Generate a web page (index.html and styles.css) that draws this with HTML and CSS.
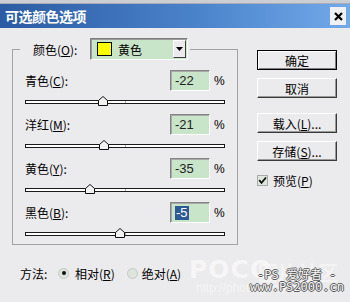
FILE: index.html
```html
<!DOCTYPE html>
<html>
<head>
<meta charset="utf-8">
<link rel="stylesheet" href="styles.css">
</head>
<body>
<div class="win">
  <div class="topstrip"></div>
  <div class="titlebar">
    <span class="title">可选颜色选项</span>
    <span class="close"><svg width="9" height="9" viewBox="0 0 9 9"><path d="M1 1 L8 8 M8 1 L1 8" stroke="#000" stroke-width="2.2"/></svg></span>
  </div>
  <div class="main">
    <fieldset class="group">
      <legend class="hdr">
        <span class="hlbl">颜色(<u>O</u>):</span>
        <span class="combo"><span class="swatch"></span><span class="ctext">黄色</span><span class="arrow"><svg width="7" height="4" viewBox="0 0 7 4"><path d="M0 0 H7 L3.5 4 Z" fill="#000"/></svg></span></span>
      </legend>
      <div class="row">
        <div class="line"><span class="lbl">青色(<u>C</u>):</span><span class="num">-22</span><span class="pct">%</span></div>
        <div class="slider"><div class="track"><span class="tick"></span></div><span class="thumb" style="left: calc(39% - 5px)"><svg width="10" height="10" viewBox="0 0 10 10"><path d="M0.5 9.5 V4.5 L5 0.5 L9.5 4.5 V9.5 Z" fill="#f2f2f2" stroke="#111"/></svg></span></div>
      </div>
      <div class="row">
        <div class="line"><span class="lbl">洋红(<u>M</u>):</span><span class="num">-21</span><span class="pct">%</span></div>
        <div class="slider"><div class="track"><span class="tick"></span></div><span class="thumb" style="left: calc(39.5% - 5px)"><svg width="10" height="10" viewBox="0 0 10 10"><path d="M0.5 9.5 V4.5 L5 0.5 L9.5 4.5 V9.5 Z" fill="#f2f2f2" stroke="#111"/></svg></span></div>
      </div>
      <div class="row">
        <div class="line"><span class="lbl">黄色(<u>Y</u>):</span><span class="num">-35</span><span class="pct">%</span></div>
        <div class="slider"><div class="track"><span class="tick"></span></div><span class="thumb" style="left: calc(32.5% - 5px)"><svg width="10" height="10" viewBox="0 0 10 10"><path d="M0.5 9.5 V4.5 L5 0.5 L9.5 4.5 V9.5 Z" fill="#f2f2f2" stroke="#111"/></svg></span></div>
      </div>
      <div class="row">
        <div class="line"><span class="lbl">黑色(<u>B</u>):</span><span class="num"><span class="sel">-5</span></span><span class="pct">%</span></div>
        <div class="slider"><div class="track"><span class="tick"></span></div><span class="thumb" style="left: calc(47.5% - 5px)"><svg width="10" height="10" viewBox="0 0 10 10"><path d="M0.5 9.5 V4.5 L5 0.5 L9.5 4.5 V9.5 Z" fill="#f2f2f2" stroke="#111"/></svg></span></div>
      </div>
    </fieldset>
    <div class="side">
      <div class="btn def">确定</div>
      <div class="btn b2">取消</div>
      <div class="btn b3">载入(<u>L</u>)...</div>
      <div class="btn b2">存储(<u>S</u>)...</div>
      <div class="chk"><span class="box"><svg width="9" height="9" viewBox="0 0 9 9"><path d="M1.2 4.2 L3.5 6.8 L8 1.5" stroke="#111" stroke-width="1.8" fill="none"/></svg></span><span class="chklbl">预览(<u>P</u>)</span></div>
    </div>
  </div>
  <div class="method">
    <span class="mlbl">方法:</span>
    <span class="radio on"><span class="dot"></span></span><span class="rlbl">相对(<u>R</u>)</span>
    <span class="radio r2"></span><span class="rlbl">绝对(<u>A</u>)</span>
  </div>
  <div class="wm">
    <span class="poco">POCO</span><span class="pocozh">图片社区</span>
    <span class="pocourl">http://photo.poco.cn</span>
    <span class="ps1">-PS 爱好者 -</span>
    <span class="ps2">www.PS2000.cn</span>
  </div>
</div>
</body>
</html>
```
FILE: styles.css
```css
* { box-sizing: border-box; }
html, body { margin: 0; padding: 0; }
body {
  width: 350px; height: 302px; overflow: hidden;
  background: #ebeaec;
  font-family: "Noto Sans CJK SC", "Liberation Sans", sans-serif;
  font-size: 12px; color: #000;
}
u { text-decoration: underline; text-underline-offset: 1px; }
.win { position: relative; width: 350px; height: 302px; background: #ebeaec; }
.topstrip { height: 4px; background: #cdced3; border-bottom: 1px solid #a9acb4; }
.titlebar {
  height: 24px; display: flex; align-items: center; justify-content: space-between;
  padding: 0 4px 0 5px;
  background: linear-gradient(to right, #2b5ba2, #4a82ca 55%, #72a9ea);
}
.title { color: #fff; font-weight: bold; font-size: 14px; letter-spacing: -0.5px; line-height: 24px; }
.close {
  width: 16px; height: 18px; background: #eef0f4;
  display: flex; align-items: center; justify-content: center;
}
.main { display: flex; gap: 19px; padding: 10px 0 0 12px; }
.group {
  width: 226px; margin: 0; min-width: 0;
  padding: 10px 12px 6px 12px;
  border: 1px solid #a2a1a5;
}
.hdr { display: flex; align-items: center; margin-left: -5px; padding: 0 2px 0 13px; }
.hlbl { width: 57px; }
.combo {
  width: 98px; height: 22px; display: flex; align-items: center;
  background: #c8e5c9; padding-left: 6px;
  border: 1px solid; border-color: #7f7f7f #fff #fff #7f7f7f;
  box-shadow: inset 1px 1px 0 #9a9a9a;
}
.swatch { width: 15px; height: 14px; background: #ffff00; border: 1px solid #000; }
.ctext { margin-left: 6px; }
.arrow {
  margin-left: auto; margin-right: 1px; width: 13px; height: 18px;
  background: #ebeaec; display: flex; align-items: center; justify-content: center;
  border: 1px solid; border-color: #fff #404040 #404040 #fff;
}
.row { display: flex; flex-direction: column; }
.row + .row { margin-top: 8px; }
.line { display: flex; align-items: center; height: 21px; }
.lbl { flex: 1; }
.num {
  width: 40px; height: 21px; background: #c8e5c9;
  border: 1px solid; border-color: #858585 #fff #fff #858585;
  box-shadow: inset 1px 1px 0 #a8a8a8;
  font-family: "Liberation Sans", sans-serif; font-size: 13px; color: #222;
  padding-left: 4px; display: flex; align-items: center;
}
.sel { background: #2d5a95; color: #fff; padding: 0 1px; line-height: 14px; }
.pct { width: 11px; margin-left: 4px; font-family: "Liberation Sans", sans-serif; font-size: 12px; }
.slider { position: relative; height: 10px; margin-top: 5px; }
.track {
  margin-top: 4px; height: 4px; background: #fff; border: 1px solid #1a1a1a;
  display: flex; justify-content: center;
}
.tick { width: 1px; height: 2px; background: #b0b0b0; }
.thumb { position: absolute; top: 0; width: 10px; height: 10px; display: block; }
.thumb svg { display: block; }
.side { display: flex; flex-direction: column; width: 80px; margin-top: 12px; }
.btn {
  height: 20px; display: flex; align-items: center; justify-content: center;
  background: #ebeaec;
  border: 1px solid; border-color: #fff #3a3a3a #3a3a3a #fff;
  box-shadow: inset -1px -1px 0 #9a9a9a;
}
.btn.def { border-color: #000; box-shadow: inset 1px 1px 0 #fff, inset -1px -1px 0 #808080; }
.b2 { margin-top: 8px; }
.b3 { margin-top: 15px; }
.chk { display: flex; align-items: center; margin-top: 13px; height: 12px; }
.box {
  width: 11px; height: 11px; background: #dfe6de;
  border: 1px solid #a7ada6; display: flex; align-items: center; justify-content: center;
}
.chklbl { margin-left: 5px; }
.method { display: flex; align-items: center; height: 16px; margin-top: 20px; padding-left: 20px; }
.mlbl { width: 38px; }
.radio {
  width: 11px; height: 11px; border-radius: 50%;
  background: #dde5dc; border: 1px solid #c4cac3;
  display: flex; align-items: center; justify-content: center;
}
.dot { width: 4px; height: 4px; border-radius: 50%; background: #111; }
.rlbl { margin-left: 6px; }
.r2 { margin-left: 12px; }
.r2 + .rlbl { margin-left: 4px; }
.wm { position: absolute; left: 0; top: 0; width: 350px; height: 302px; pointer-events: none; }
.poco {
  position: absolute; left: 189px; top: 255px;
  font-family: "DejaVu Sans", sans-serif; font-weight: bold; font-size: 25px;
  color: rgba(255, 255, 255, 0.6); letter-spacing: 1px;
}
.pocozh {
  position: absolute; left: 258px; top: 258px;
  font-weight: bold; font-size: 20px; color: rgba(255, 255, 255, 0.45);
}
.pocourl {
  position: absolute; left: 196px; top: 281px;
  font-family: "Liberation Sans", sans-serif; font-size: 12px; color: rgba(255, 255, 255, 0.55);
}
.ps1, .ps2 {
  position: absolute; font-family: "DejaVu Sans Mono", "Noto Sans CJK SC", monospace;
  font-size: 12px; line-height: 12px; color: #f6f6f6;
  text-shadow: 1px 0 #5a5a5a, -1px 0 #5a5a5a, 0 1px #5a5a5a, 0 -1px #5a5a5a;
}
.ps1 { left: 257px; top: 269px; }
.ps2 { left: 250px; top: 281px; }
```
